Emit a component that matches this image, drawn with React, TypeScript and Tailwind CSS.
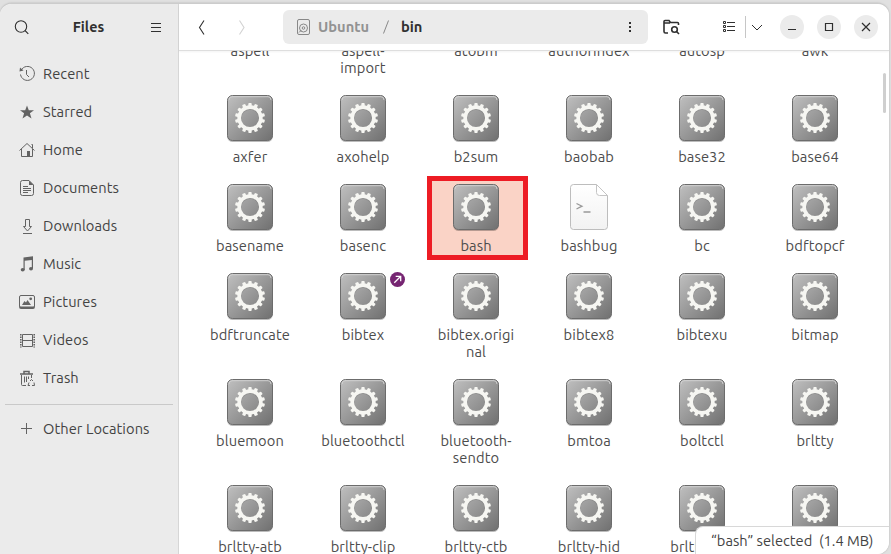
import React from "react";

const font = "font-['Ubuntu','Noto_Sans',sans-serif]";

const teeth = Array.from({ length: 14 }, (_, i) => (i * 360) / 14);

function ExecIcon() {
  return (
    <svg width="46" height="48" viewBox="0 0 46 48" className="block">
      <defs>
        <linearGradient id="plate" x1="0" y1="0" x2="1" y2="1">
          <stop offset="0" stopColor="#c0c0c0" />
          <stop offset="1" stopColor="#707070" />
        </linearGradient>
      </defs>
      <rect x="0.5" y="2" width="45" height="45" rx="5" fill="#000" opacity="0.12" />
      <rect x="0" y="1" width="46" height="46" rx="5.5" fill="#000" opacity="0.16" />
      <rect x="0.5" y="0.5" width="45" height="45" rx="5" fill="url(#plate)" stroke="#6c6c6c" />
      <path d="M2 5Q2 1.7 5 1.7H41Q44 1.7 44 5" fill="none" stroke="#d4d4d4" strokeWidth="0.9" />
      <g transform="translate(23 23)">
        <circle cy="0.7" r="10.9" fill="none" stroke="#555" strokeWidth="4" opacity="0.25" />
        {teeth.map((a) => (
          <rect key={a} x="-1.7" y="-15" width="3.4" height="5" rx="0.9" fill="#f6f6f2" transform={`rotate(${a})`} />
        ))}
        <circle r="10.9" fill="none" stroke="#f6f6f2" strokeWidth="3.7" />
      </g>
    </svg>
  );
}

function ScriptIcon() {
  return (
    <svg width="46" height="48" viewBox="0 0 46 48" className="block">
      <defs>
        <linearGradient id="sheet" x1="0" y1="0" x2="0" y2="1">
          <stop offset="0" stopColor="#fff" />
          <stop offset="1" stopColor="#f2f2f2" />
        </linearGradient>
      </defs>
      <path d="M7.500 0.500H30.500L41.500 11.500V42.500Q41.500 45.500 38.500 45.500H7.500Q4.500 45.500 4.500 42.500V3.500Q4.500 0.500 7.500 0.500Z" fill="url(#sheet)" stroke="#bdbdbd" />
      <path d="M30.500 0.500V8.500Q30.500 11.500 33.500 11.500H41.500Z" fill="#fff" stroke="#c4c4c4" />
      <path d="M10.500 19.500L16 22.200L10.500 25M17.500 28H24.500" fill="none" stroke="#999" strokeWidth="1.300" />
    </svg>
  );
}

type Item = { name: string; lines?: string[]; kind?: "script"; link?: boolean; selected?: boolean };

const rows: Item[][] = [
  [{ name: "aspell" }, { name: "aspell-import", lines: ["aspell-", "import"] }, { name: "atobm" }, { name: "authorindex" }, { name: "autosp" }, { name: "awk" }],
  [{ name: "axfer" }, { name: "axohelp" }, { name: "b2sum" }, { name: "baobab" }, { name: "base32" }, { name: "base64" }],
  [{ name: "basename" }, { name: "basenc" }, { name: "bash", selected: true }, { name: "bashbug", kind: "script" }, { name: "bc" }, { name: "bdftopcf" }],
  [{ name: "bdftruncate" }, { name: "bibtex", link: true }, { name: "bibtex.original", lines: ["bibtex.origi", "nal"] }, { name: "bibtex8" }, { name: "bibtexu" }, { name: "bitmap" }],
  [{ name: "bluemoon" }, { name: "bluetoothctl" }, { name: "bluetooth-sendto", lines: ["bluetooth-", "sendto"] }, { name: "bmtoa" }, { name: "boltctl" }, { name: "brltty" }],
  [{ name: "brltty-atb" }, { name: "brltty-clip" }, { name: "brltty-ctb" }, { name: "brltty-hid" }, { name: "brltty-ktb" }, { name: "brltty-lscmds" }],
];

function FileCell({ item }: { item: Item }) {
  return (
    <div className="relative flex w-[113px] flex-col items-center pb-[19px]">
      {item.selected && <div className="absolute top-[-8px] left-[7.5px] h-[84px] w-[101px] border-5 border-[#ed1c24] bg-[#fad3c6]" />}
      <div className="relative h-[53px]">{item.kind === "script" ? <ScriptIcon /> : <ExecIcon />}</div>
      <div className="relative text-center text-[14.67px] leading-[17px] tracking-[0.1px] whitespace-nowrap text-[#4c4c4c]">
        {(item.lines ?? [item.name]).map((l) => (
          <div key={l}>{l}</div>
        ))}
      </div>
      {item.link && (
        <svg className="absolute top-[-1px] left-[83px]" width="16" height="16" viewBox="0 0 16 16">
          <circle cx="7.500" cy="7.500" r="7.500" fill="#762572" />
          <path d="M4.300 10.700L10.500 4.500M5.700 4.300H10.700V9.300" fill="none" stroke="#fff" strokeWidth="1.300" />
        </svg>
      )}
    </div>
  );
}

const stroke = { fill: "none", stroke: "currentColor", strokeWidth: 1 };

const places: { label: string; icon: React.ReactNode }[] = [
  {
    label: "Recent",
    icon: (
      <g {...stroke}>
        <path d="M2.200 4.200A7 7 0 1 1 1.500 8.500M7.500 4V8.500L10 11" />
        <path d="M0.500 5.500L1 1.500L4.500 4.500Z" fill="currentColor" stroke="none" />
      </g>
    ),
  },
  { label: "Starred", icon: <path d="M8 1.500L9.800 6.200H15L10.900 9.300L12.500 14.500L8 11.400L3.500 14.500L5.100 9.300L1 6.200H6.200Z" fill="currentColor" /> },
  {
    label: "Home",
    icon: (
      <g {...stroke}>
        <path d="M0.500 8.500L8 1.500L15.500 8.500M2.500 7V14.500H13.500V7M12.500 2.500H13.500V6" />
        <path d="M8 9H11V15H8Z" fill="currentColor" stroke="none" />
      </g>
    ),
  },
  {
    label: "Documents",
    icon: (
      <g {...stroke}>
        <path d="M10 0.500H3.500Q1.500 0.500 1.500 2.500V13.500Q1.500 15.500 3.500 15.500H12.500Q14.500 15.500 14.500 13.500V5ZM4 6.500H9M4 8.500H12M4 10.500H12M4 12.500H9" />
        <path d="M10 0.500V5H14.500Z" fill="currentColor" stroke="none" />
      </g>
    ),
  },
  { label: "Downloads", icon: <path {...stroke} d="M6.500 1.500H10.500V8.500H12.500L8.500 13L4.500 8.500H6.500ZM4 15.500H13" /> },
  {
    label: "Music",
    icon: (
      <g fill="currentColor">
        <path d="M4.500 1.500L14 0.300V12.500H12.800V4L5.700 4.800V14H4.500Z" />
        <ellipse cx="3.700" cy="13.700" rx="2" ry="1.700" />
        <ellipse cx="12" cy="12.700" rx="2" ry="1.700" />
      </g>
    ),
  },
  {
    label: "Pictures",
    icon: (
      <g>
        <rect x="0.500" y="1.500" width="15" height="12" rx="1.500" {...stroke} />
        <path d="M0 12.500H16Q16 15 14 15H2Q0 15 0 12.500ZM3 11L5.500 7L7 8.500L8.500 6L12 11Z" fill="currentColor" />
        <circle cx="11.700" cy="4.800" r="1.400" fill="currentColor" />
      </g>
    ),
  },
  {
    label: "Videos",
    icon: (
      <g {...stroke}>
        <path d="M3.500 2.500H13.500V14.500H3.500ZM3.500 8.500H13.500" />
        <path d="M1.800 2V15.500M15.200 2V15.500" strokeWidth="1.600" strokeDasharray="1.500 1" />
      </g>
    ),
  },
  {
    label: "Trash",
    icon: (
      <g {...stroke}>
        <path d="M1 4H14M5 3.500V1.500H10V3.500" strokeWidth="1.500" />
        <path d="M2.500 5V14.500Q2.500 15.500 3.500 15.500H7M5.500 6.500V12.500M7.500 6.500V12M9.500 6.500V9M12.500 5V8" />
        <path d="M11 11L12.500 9.500L14 11M15 12.500L15.500 15.500H13M11 15.500H9L10 12.500" />
      </g>
    ),
  },
];

function Place({ label, icon }: { label: string; icon: React.ReactNode }) {
  return (
    <div className="flex h-[38px] items-center gap-2 pl-[19px] text-[14.67px] tracking-[0.07px] text-[#434343]">
      <svg width="16" height="16" viewBox="0 0 16 16" className="shrink-0 text-[#636363]">
        {icon}
      </svg>
      <span className="whitespace-nowrap">{label}</span>
    </div>
  );
}

function WindowButton({ d }: { d: string }) {
  return (
    <div className="flex size-6 items-center justify-center rounded-full bg-[#ebebeb]">
      <svg width="16" height="16" viewBox="0 0 16 16">
        <path d={d} fill="none" stroke="#2e2e2e" strokeWidth="1.200" />
      </svg>
    </div>
  );
}

export default function App() {
  return (
    <div className={`h-[554px] w-[891px] overflow-hidden bg-[#e0e0e0] pt-[3px] pr-[2px] ${font}`}>
      <div className="relative flex h-[551px] overflow-hidden rounded-t-xl rounded-br-xl border-t border-[#cccccc] bg-white shadow-[0_0_2px_#aaa]">
        <aside className="w-[179px] shrink-0 border-r border-[#d6d6d6] bg-[#ebebeb]">
          <header className="flex h-[47px] items-center pl-[14px] text-[#303030]">
            <svg width="16" height="16" viewBox="0 0 16 16" fill="none" stroke="currentColor" strokeWidth="1.100">
              <circle cx="7" cy="6.500" r="5.700" />
              <path d="M11 10.500L14.300 13.800" />
            </svg>
            <div className="w-[117px] text-center text-[14.3px] font-bold">Files</div>
            <svg width="16" height="16" viewBox="0 0 16 16" stroke="currentColor" className="ml-[1px]">
              <path d="M3 3.500H13M3 7.500H13M3 11.500H13" />
            </svg>
          </header>
          <nav className="pt-1">
            {places.map((p) => (
              <Place key={p.label} {...p} />
            ))}
            <div className="mx-[5px] mt-[7px] mb-[5px] h-px bg-[#c9c9c9]" />
            <Place label="Other Locations" icon={<path d="M2 7.500H13M7.500 2V13" {...stroke} />} />
          </nav>
        </aside>
        <main className="flex min-w-0 flex-1 flex-col">
          <header className="relative z-10 flex h-[47px] shrink-0 items-center border-b border-[#dedede] bg-white text-[#303030] shadow-[0_1px_2px_#0000000d]">
            <svg width="104" height="34" viewBox="0 0 104 34" fill="none" strokeWidth="1.100">
              <path d="M25 10.500L20.500 17.500L25 24.500" stroke="#303030" />
              <path d="M60.500 10.500L65 17.500L60.500 24.500" stroke="#d2d2d2" />
            </svg>
            <div className="flex h-[34px] w-[365px] items-center rounded-md bg-[#ebebeb] pl-[13px] text-[14.67px] font-bold">
              <svg width="16" height="16" viewBox="0 0 16 16" fill="none" stroke="#888">
                <rect x="1.500" y="0.500" width="12" height="15" rx="1.500" />
                <circle cx="7.500" cy="9" r="4" />
                <circle cx="7.500" cy="9" r="1.300" />
                <path d="M3 13.500L5.500 11" />
              </svg>
              <span className="ml-[6px] w-[51px] text-[#929292]">Ubuntu</span>
              <svg width="8" height="16" viewBox="0 0 8 16" stroke="#888" className="ml-[13px]">
                <path d="M6.500 1.500L1.500 14.500" />
              </svg>
              <span className="ml-[11px]">bin</span>
              <svg width="4" height="16" viewBox="0 0 4 16" fill="#303030" className="mr-[16px] ml-auto">
                <path d="M1 3H3V5H1ZM1 7H3V9H1ZM1 11H3V13H1Z" />
              </svg>
            </div>
            <svg width="18" height="18" viewBox="0 0 18 18" fill="none" stroke="currentColor" strokeWidth="1.600" className="ml-[14px]">
              <path d="M6 15H3.500Q2 15 2 13.500V3.500Q2 2.500 3 2.500H7L8.500 4.500H15.500Q16.500 4.500 16.500 5.500V7M2 5H8" />
              <circle cx="12.500" cy="11.500" r="2.800" />
              <path d="M14.500 13.500L17 16" />
            </svg>
            <svg width="16" height="16" viewBox="0 0 16 16" fill="none" stroke="currentColor" className="ml-[42px]">
              <path d="M1.500 2.500H3.500V4.500H1.500ZM1.500 6.500H3.500V8.500H1.500ZM1.500 10.500H3.500V12.500H1.500ZM5 3.500H13M5 7.500H13M5 11.500H13" />
            </svg>
            <div className="ml-[7px] h-[22px] w-px bg-[#c6c6c6]" />
            <svg width="12" height="12" viewBox="0 0 12 12" fill="none" stroke="currentColor" className="ml-[5px]">
              <path d="M1 4L6 9L11 4" />
            </svg>
            <div className="ml-[17px] flex gap-[13px]">
              <WindowButton d="M4 10.500H12" />
              <WindowButton d="M4.500 4.500H11.500V11.500H4.500Z" />
              <WindowButton d="M4 4L12 12M12 4L4 12" />
            </div>
          </header>
          <div className="relative h-[503px] overflow-hidden pl-[14.5px]">
            <div className="mt-[-62px]">
              {rows.map((r) => (
                <div key={r[0].name} className="flex">
                  {r.map((i) => (
                    <FileCell key={i.name} item={i} />
                  ))}
                </div>
              ))}
            </div>
            <div className="absolute top-[22px] right-[3px] h-[40px] w-[3px] rounded-full bg-[#cfcfcf]" />
            <div className="absolute right-0 bottom-0 flex h-[28px] w-[194px] items-center rounded-tl-lg border-t border-l border-[#d8d8d8] bg-white pl-[15px] text-[14.67px] whitespace-pre text-[#434343]">
              “bash” selected  (1.4 MB)
            </div>
          </div>
        </main>
      </div>
    </div>
  );
}
